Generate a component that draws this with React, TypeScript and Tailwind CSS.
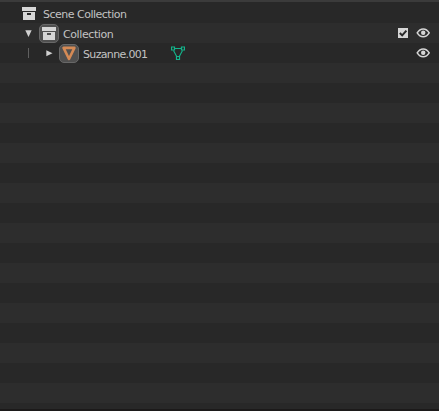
import type { ReactNode } from "react";

const STRIPES = Array.from({ length: 20 }, (_, i) => i);

function CollectionIcon() {
  return (
    <svg width="14" height="13" viewBox="0 0 14 13" className="block shrink-0" fill="#d6d6d6">
      <path d="M0 0h14v4H0z" />
      <path fillRule="evenodd" d="M1 5h12v8H1z M5 6v2h4V6z" />
    </svg>
  );
}

function MeshIcon() {
  return (
    <svg width="14" height="15" viewBox="0 0 14 15" className="block shrink-0" fill="none">
      <path d="M1.600 1.900h10.800L7 13z" stroke="#d58a55" strokeWidth="2.600" strokeLinejoin="round" />
    </svg>
  );
}

function MeshDataIcon() {
  return (
    <svg width="14" height="15" viewBox="0 0 14 15" className="block shrink-0" fill="none" stroke="#13b58c">
      <path d="M4 2.500h6M2.500 4.500l3.200 6M11.500 4.500l-3.200 6" strokeWidth="1.100" />
      <path d="M.5 1h3v3h-3zM10.500 1h3v3h-3zM5.500 10.500h3v3h-3z" strokeWidth="1.200" />
    </svg>
  );
}

function EyeIcon() {
  return (
    <svg width="14" height="10" viewBox="0 0 14 10" className="mb-px block shrink-0" fill="none">
      <path d="M1.200 4.800C2.900 2 5 .9 7.200.9S11.500 2 13.200 4.800C11.500 7.600 9.400 8.700 7.200 8.700S2.900 7.600 1.200 4.800z" stroke="#d6d6d6" strokeWidth="1.500" />
      <circle cx="7.200" cy="4.700" r="2.200" fill="#d6d6d6" />
    </svg>
  );
}

function Checkbox() {
  return (
    <svg width="10" height="10" viewBox="0 0 10 10" className="mb-px block shrink-0">
      <path d="M0 0h10v10H0z" fill="#d6d6d6" />
      <path d="M1.800 5l2.400 2.400L8.400 2.700" fill="none" stroke="#292929" strokeWidth="2" />
    </svg>
  );
}

function Badge({ children }: { children: ReactNode }) {
  return (
    <span className="flex h-[19px] w-5 shrink-0 items-center justify-center rounded-[5px] border border-[#686868] bg-[#505050]">
      {children}
    </span>
  );
}

function Row({ index }: { index: number }) {
  if (index === 0) {
    return (
      <>
        <span className="ml-[22px]"><CollectionIcon /></span>
        <span className="ml-[7px] pt-[3px] tracking-[-0.5px]">Scene Collection</span>
      </>
    );
  }
  if (index === 1) {
    return (
      <>
        <svg width="7" height="7" viewBox="0 0 7 7" className="ml-[25px] block" fill="#d0d0d0"><path d="M.3 .3h6.400L3.500 7z" /></svg>
        <span className="ml-[7px]"><Badge><CollectionIcon /></Badge></span>
        <span className="ml-1 pt-[3px] tracking-[-0.4px]">Collection</span>
        <span className="mr-[9px] ml-auto flex items-center gap-2"><Checkbox /><EyeIcon /></span>
      </>
    );
  }
  return (
    <>
      <span className="mb-px ml-7 h-2.5 w-px bg-[#606060]" />
      <svg width="7" height="7" viewBox="0 0 7 7" className="ml-[17px] block" fill="#d0d0d0"><path d="M.3 .3v6L6.500 3.300z" /></svg>
      <span className="ml-1.5"><Badge><MeshIcon /></Badge></span>
      <span className="ml-1 w-[88px] pt-[3px] tracking-[-0.66px]">Suzanne.001</span>
      <MeshDataIcon />
      <span className="mr-[9px] ml-auto"><EyeIcon /></span>
    </>
  );
}

export default function App() {
  return (
    <main className="flex h-[411px] w-[439px] flex-col overflow-hidden bg-[#282828] font-['DejaVu_Sans',sans-serif] text-[11px] leading-5 whitespace-nowrap text-[#c3c3c3]">
      <div className="h-0.5 shrink-0 bg-[#3b3b3b]" />
      <div className="h-px shrink-0" />
      {STRIPES.map((i) => (
        <div key={i} className={`flex h-5 shrink-0 items-center pt-px ${i % 2 ? "bg-[#2d2d2d]" : "bg-[#282828]"}`}>
          {i < 3 && <Row index={i} />}
        </div>
      ))}
      <div className="h-1.5 shrink-0" />
      <div className="h-0.5 shrink-0 bg-[#1c1a1a]" />
    </main>
  );
}
